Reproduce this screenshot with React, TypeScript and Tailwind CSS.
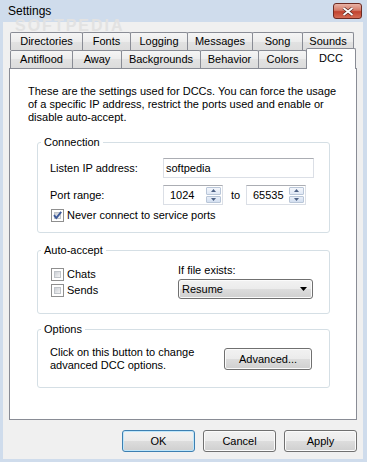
import type { ReactNode } from 'react'

const backTabs = [
  { label: 'Directories', w: 'w-[73px]' },
  { label: 'Fonts', w: 'w-[49px]' },
  { label: 'Logging', w: 'w-[58px]' },
  { label: 'Messages', w: 'w-[66px]' },
  { label: 'Song', w: 'w-[51px]' },
  { label: 'Sounds', w: 'w-[52px]' },
]

const frontTabs = [
  { label: 'Antiflood', w: 'w-[63px]' },
  { label: 'Away', w: 'w-[50px]' },
  { label: 'Backgrounds', w: 'w-[80px]' },
  { label: 'Behavior', w: 'w-[59px]' },
  { label: 'Colors', w: 'w-[49px]' },
]

const tabBg = 'bg-[linear-gradient(#f5f5f5,#ececec_50%,#e2e2e2_50%,#dcdcdc)]'
const btnBg = 'bg-[linear-gradient(#f2f2f2,#ebebeb_50%,#dddddd_50%,#cfcfcf)]'

function Tab({ label, w }: { label: string; w: string }) {
  return (
    <div className={`${w} h-[18px] -ml-px first:ml-0 border border-b-0 border-[#898c95] rounded-t-[2px] flex items-center justify-center ${tabBg}`}>
      {label}
    </div>
  )
}

function Checkbox({ checked }: { checked?: boolean }) {
  return (
    <span className="w-[13px] h-[13px] shrink-0 border border-[#8f8f8f] bg-white p-[2px] flex relative">
      <span className="flex-1 bg-[linear-gradient(135deg,#cbcfd5,#f4f4f4)] border border-[#c0c4c9]" />
      {checked && (
        <svg className="absolute left-0 top-0" width="11" height="11" viewBox="0 0 11 11">
          <path d="M2 5.2 L4.3 8 L9.2 1.8" fill="none" stroke="#3d5a9a" strokeWidth="1.9" />
        </svg>
      )}
    </span>
  )
}

function Spinner({ value }: { value: string }) {
  return (
    <div className="w-[60px] h-[20px] flex bg-white border border-[#dbdfe6] border-t-[#abadb3]">
      <span className="flex-1 flex items-center pl-[6px]">{value}</span>
      <div className="w-[17px] flex flex-col gap-px p-px">
        <span className="flex-1 flex items-center justify-center border border-[#b9c6d8] rounded-[1px] bg-[linear-gradient(#f4f7fc,#dfe8f5)]">
          <svg width="5" height="3" viewBox="0 0 5 3"><path d="M0 3 L2.5 0 L5 3 Z" fill="#4d6185" /></svg>
        </span>
        <span className="flex-1 flex items-center justify-center border border-[#b9c6d8] rounded-[1px] bg-[linear-gradient(#e8eef8,#d3dff0)]">
          <svg width="5" height="3" viewBox="0 0 5 3"><path d="M0 0 L2.5 3 L5 0 Z" fill="#4d6185" /></svg>
        </span>
      </div>
    </div>
  )
}

function Group({ title, className, children }: { title: string; className: string; children: ReactNode }) {
  return (
    <fieldset className={`ml-[27px] w-[293px] border border-[#d5dfe5] rounded-[3px] ${className}`}>
      <legend className="ml-[3px] px-[3px] leading-[13px]">{title}</legend>
      {children}
    </fieldset>
  )
}

function Button({ label, def, w }: { label: string; def?: boolean; w: string }) {
  return (
    <button
      className={`${w} h-[22px] rounded-[3px] border ${btnBg} ${def ? 'border-[#3c7fb1] shadow-[inset_0_0_0_1px_#bfe6fa]' : 'border-[#707070] shadow-[inset_0_0_0_1px_#fbfbfb]'} flex items-center justify-center text-[11px]`}
    >
      {label}
    </button>
  )
}

export default function App() {
  return (
    <div className="relative w-[367px] h-[462px] flex flex-col bg-[#cfdcec] font-['Liberation_Sans',Arial,sans-serif] text-[11px] leading-[13px] text-black overflow-hidden">
      {/* Title bar */}
      <div className="h-[22px] flex items-center justify-between pl-[8px] pr-[5px]">
        <span className="text-[12px]">Settings</span>
        <div className="w-[29px] h-[16px] rounded-[3px] border border-[#6d2a22] bg-[linear-gradient(#e9b3a6,#d47a68_45%,#c2432f_55%,#d56c55)] flex items-center justify-center">
          <svg width="12" height="9" viewBox="0 0 12 9">
            <path d="M1.5 1 L10.5 8 M10.5 1 L1.5 8" stroke="#5a2a24" strokeWidth="3.2" />
            <path d="M1.5 1 L10.5 8 M10.5 1 L1.5 8" stroke="#ffffff" strokeWidth="1.8" />
          </svg>
        </div>
      </div>

      {/* Client area */}
      <div className="flex-1 ml-[3px] mr-[4px] mb-[3px] bg-[#f0f0f0] pt-[10px] px-[6px] flex flex-col">
        {/* Tabs */}
        <div className="flex pl-px h-[18px]">
          {backTabs.map(t => <Tab key={t.label} {...t} />)}
        </div>
        <div className="flex items-start pl-px h-[18px]">
          {frontTabs.map(t => <Tab key={t.label} {...t} />)}
          <div className="relative z-10 w-[50px] h-[21px] -mt-[2px] -ml-px border border-b-0 border-[#898c95] rounded-t-[2px] bg-white flex items-start justify-center pt-[3px]">
            DCC
          </div>
        </div>

        {/* Panel */}
        <div className="h-[352px] border border-[#898c95] bg-white flex flex-col">
          <p className="pt-[16px] pl-[18px] pr-[12px]">
            These are the settings used for DCCs. You can force the usage of a specific IP address, restrict the ports used and enable or disable auto-accept.
          </p>

          <Group title="Connection" className="mt-[12px] pt-[9px] pb-[9px]">
            <div className="flex items-center h-[20px] pl-[12px]">
              <span className="w-[113px]">Listen IP address:</span>
              <div className="w-[151px] h-[20px] flex items-center pl-[2px] bg-white border border-[#dbdfe6] border-t-[#abadb3]">
                softpedia
              </div>
            </div>
            <div className="flex items-center h-[20px] mt-[7px] pl-[12px]">
              <span className="w-[113px]">Port range:</span>
              <Spinner value="1024" />
              <span className="ml-[8px] w-[15px]">to</span>
              <Spinner value="65535" />
            </div>
            <div className="flex items-center h-[15px] mt-[3px] pl-[13px] gap-[3px]">
              <Checkbox checked />
              <span>Never connect to service ports</span>
            </div>
          </Group>

          <Group title="Auto-accept" className="mt-[11px] pt-[7px] pb-[14px]">
            <div className="flex">
              <div className="w-[140px] pl-[13px] pt-[3px] flex flex-col gap-px">
                <div className="flex items-center h-[15px] gap-[3px]">
                  <Checkbox />
                  <span>Chats</span>
                </div>
                <div className="flex items-center h-[15px] gap-[3px]">
                  <Checkbox />
                  <span>Sends</span>
                </div>
              </div>
              <div className="flex flex-col">
                <span className="h-[13px]">If file exists:</span>
                <div className={`mt-[2px] w-[135px] h-[20px] rounded-[3px] border border-[#707070] ${btnBg} shadow-[inset_0_0_0_1px_#fbfbfb] flex items-center justify-between pl-[3px] pr-[5px]`}>
                  <span>Resume</span>
                  <svg width="7" height="4" viewBox="0 0 7 4"><path d="M0 0 L7 0 L3.5 4 Z" fill="#000" /></svg>
                </div>
              </div>
            </div>
          </Group>

          <Group title="Options" className="mt-[9px] pt-[10px] pb-[15px]">
            <div className="flex items-center pl-[12px]">
              <p className="w-[174px]">
                Click on this button to change
                <br />
                advanced DCC options.
              </p>
              <Button label="Advanced..." w="w-[88px]" />
            </div>
          </Group>
        </div>

        {/* Dialog buttons */}
        <div className="mt-[10px] flex justify-end gap-[8px]">
          <Button label="OK" def w="w-[73px]" />
          <Button label="Cancel" w="w-[73px]" />
          <Button label="Apply" w="w-[73px]" />
        </div>
      </div>

      {/* watermark */}
      <div className="absolute left-[15px] top-[19px] text-[16px] leading-[14px] font-bold tracking-[2px] text-[#e2e2e2] pointer-events-none">
        SOFTPEDIA
      </div>
    </div>
  )
}
